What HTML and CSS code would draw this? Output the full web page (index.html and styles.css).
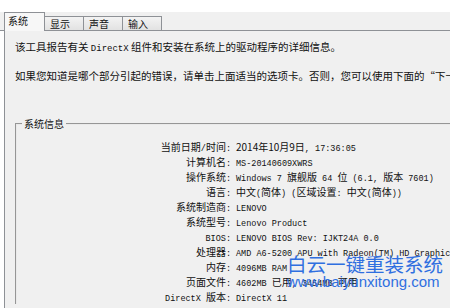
FILE: index.html
```html
<!DOCTYPE html>
<html>
<head>
<meta charset="utf-8">
<title>DirectX 诊断工具</title>
<link rel="stylesheet" href="styles.css">
</head>
<body>
<div class="page">
  <div class="tabs">
    <div class="tab on">系统</div>
    <div class="tab">显示</div>
    <div class="tab">声音</div>
    <div class="tab">输入</div>
  </div>

  <div class="panel">
    <p class="intro">该工具报告有关 <span class="en">DirectX</span> 组件和安装在系统上的驱动程序的详细信息。</p>
    <p class="intro second">如果您知道是哪个部分引起的错误，请单击上面适当的选项卡。否则，您可以使用下面的“下一页”按钮按顺序访问每一页。</p>

    <fieldset class="group">
      <legend>系统信息</legend>
      <div class="info">
        <div class="lbl">当前日期<span class="en">/</span>时间<span class="en">:</span></div>
        <div class="val">2014年10月9日<span class="en">, 17:36:05</span></div>

        <div class="lbl">计算机名<span class="en">:</span></div>
        <div class="val"><span class="en">MS-20140609XWRS</span></div>

        <div class="lbl">操作系统<span class="en">:</span></div>
        <div class="val"><span class="en">Windows 7 </span>旗舰版<span class="en"> 64 </span>位<span class="en"> (6.1, </span>版本<span class="en"> 7601)</span></div>

        <div class="lbl">语言<span class="en">:</span></div>
        <div class="val">中文<span class="en">(</span>简体<span class="en">) (</span>区域设置<span class="en">: </span>中文<span class="en">(</span>简体<span class="en">))</span></div>

        <div class="lbl">系统制造商<span class="en">:</span></div>
        <div class="val"><span class="en">LENOVO</span></div>

        <div class="lbl">系统型号<span class="en">:</span></div>
        <div class="val"><span class="en">Lenovo Product</span></div>

        <div class="lbl"><span class="en">BIOS:</span></div>
        <div class="val"><span class="en">LENOVO BIOS Rev: IJKT24A 0.0</span></div>

        <div class="lbl">处理器<span class="en">:</span></div>
        <div class="val"><span class="en">AMD A6-5200 APU with Radeon(TM) HD Graphics</span></div>

        <div class="lbl">内存<span class="en">:</span></div>
        <div class="val"><span class="en">4096MB RAM</span></div>

        <div class="lbl">页面文件<span class="en">:</span></div>
        <div class="val"><span class="en">4602MB </span>已用<span class="en">, 3454MB </span>可用</div>

        <div class="lbl"><span class="en">DirectX </span>版本<span class="en">:</span></div>
        <div class="val"><span class="en">DirectX 11</span></div>
      </div>
    </fieldset>
  </div>

  <div class="mark">
    <div class="mark-cn">白云一键重装系统</div>
    <div class="mark-url">www.baiyunxitong.com</div>
  </div>
</div>
</body>
</html>
```

FILE: styles.css
```css
html, body {
  margin: 0;
  height: 308px;
  overflow: hidden;
  background: #ffffff;
}
.page {
  position: relative;
  width: 470px;
  height: 308px;
  overflow: hidden;
  padding-top: 12px;
  box-sizing: border-box;
  font-family: "Noto Sans CJK SC", "Liberation Sans", sans-serif;
  font-size: 10px;
  color: #111111;
}
.en {
  font-family: "Liberation Mono", monospace;
  font-size: 8.5px;
  line-height: 8px;
}

/* tab strip */
.tabs {
  display: flex;
  align-items: flex-end;
  height: 19px;
  padding-left: 4px;
  background: #f0f0f0;
  border-bottom: 1px solid #8e9196;
  box-sizing: border-box;
}
.tab {
  width: 40px;
  height: 14px;
  line-height: 14px;
  padding-left: 5px;
  box-sizing: border-box;
  border: 1px solid #8e9196;
  border-bottom: none;
  margin-left: -1px;
  background: linear-gradient(#f3f3f3, #e2e2e2);
}
.tab:first-child {
  margin-left: 0;
}
.tab.on {
  position: relative;
  width: 41px;
  height: 19px;
  line-height: 16px;
  padding-left: 3px;
  margin-bottom: -1px;
  background: #f7f7f7;
  z-index: 1;
}

/* panel */
.panel {
  margin-left: 4px;
  padding: 8px 0 0 10px;
  height: 300px;
  background: #f0f0f0;
  border-left: 1px solid #8e9196;
}
.intro {
  margin: 0;
  height: 15px;
  line-height: 15px;
  font-size: 10.5px;
  white-space: nowrap;
}
.intro .en {
  font-size: 9px;
}
.intro.second {
  margin-top: 14px;
}

.group {
  margin: 33px 0 0 0;
  padding: 0 0 0 4px;
  border: 2px groove #eaeaea;
  border-right: none;
  border-bottom: none;
}
.group legend {
  padding: 0 2px;
  margin-left: 1px;
  line-height: 15px;
}
.info {
  display: grid;
  grid-template-columns: 210px 1fr;
  grid-auto-rows: 15px;
  column-gap: 5px;
  padding-top: 8px;
  line-height: 15px;
  white-space: nowrap;
}
.lbl {
  text-align: right;
}

/* watermark */
.mark {
  position: absolute;
  left: 287px;
  top: 254px;
  color: #2f6fe0;
}
.mark-cn {
  font-family: "Noto Sans CJK SC", sans-serif;
  font-size: 19.5px;
  line-height: 20px;
}
.mark-url {
  font-family: "Liberation Sans", sans-serif;
  font-size: 15px;
  line-height: 16px;
}
```
